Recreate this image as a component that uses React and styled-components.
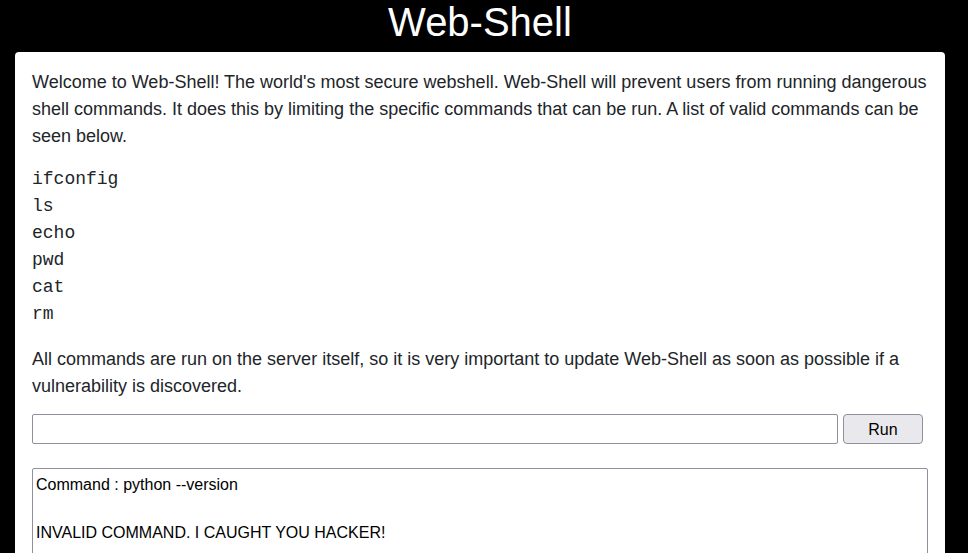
import React, { useState } from "react";
import styled, { createGlobalStyle } from "styled-components";

const GlobalStyle = createGlobalStyle`
  html, body {
    margin: 0;
    padding: 0;
    background: #000;
    font-family: "Liberation Sans", Arial, sans-serif;
  }
`;

const Page = styled.div`
  width: 930px;
  margin: 0 0 0 15px;
`;

const Title = styled.h1`
  margin: 0 0 8px;
  font-size: 40px;
  font-weight: normal;
  line-height: 44px;
  color: #fff;
  text-align: center;
`;

const Card = styled.div`
  background: #fff;
  border-radius: 4px;
  padding: 17px 17px 40px;
  min-height: 600px;
  box-sizing: border-box;
  color: #212529;
`;

const Text = styled.p`
  margin: 0 0 ${({ $after }) => $after}px;
  font-size: 18px;
  line-height: 27px;
`;

const CommandList = styled.ul`
  list-style: none;
  margin: 0 0 18px;
  padding: 0;
`;

const CommandItem = styled.li`
  font-family: "Liberation Mono", "Courier New", monospace;
  font-size: 18px;
  line-height: 27px;
`;

const RunRow = styled.form`
  display: flex;
  gap: 5px;
  margin: 0 0 24px;
`;

const CommandInput = styled.input`
  width: 806px;
  height: 30px;
  box-sizing: border-box;
  border: 1px solid #8f8f9d;
  border-radius: 2px;
  padding: 0 4px;
  font-family: "Liberation Sans", Arial, sans-serif;
  font-size: 16px;
  outline: none;
`;

const RunButton = styled.button`
  width: 80px;
  height: 30px;
  box-sizing: border-box;
  padding: 2px 0 0;
  background: #e9e9ed;
  border: 1px solid #8f8f9d;
  border-radius: 4px;
  font-family: "Liberation Sans", Arial, sans-serif;
  font-size: 16px;
  color: #000;
  cursor: pointer;
`;

const Output = styled.div`
  border: 1px solid #8f8f9d;
  border-radius: 2px;
  padding: 4px 3px 3px;
  min-height: 160px;
  font-size: 16px;
  line-height: 24px;
  color: #000;
  white-space: pre-wrap;
`;

const commands = ["ifconfig", "ls", "echo", "pwd", "cat", "rm"];

export default function App() {
  const [cmd, setCmd] = useState("");

  return (
    <Page>
      <GlobalStyle />
      <Title>Web-Shell</Title>
      <Card>
        <Text $after={16}>
          Welcome to Web-Shell! The world's most secure webshell. Web-Shell will
          prevent users from running dangerous shell commands. It does this by
          limiting the specific commands that can be run. A list of valid
          commands can be seen below.
        </Text>
        <CommandList>
          {commands.map((c) => (
            <CommandItem key={c}>{c}</CommandItem>
          ))}
        </CommandList>
        <Text $after={14}>
          All commands are run on the server itself, so it is very important to
          update Web-Shell as soon as possible if a vulnerability is discovered.
        </Text>
        <RunRow onSubmit={(e) => e.preventDefault()}>
          <CommandInput value={cmd} onChange={(e) => setCmd(e.target.value)} />
          <RunButton type="submit">Run</RunButton>
        </RunRow>
        <Output>{"Command : python --version\n\nINVALID COMMAND. I CAUGHT YOU HACKER!"}</Output>
      </Card>
    </Page>
  );
}
